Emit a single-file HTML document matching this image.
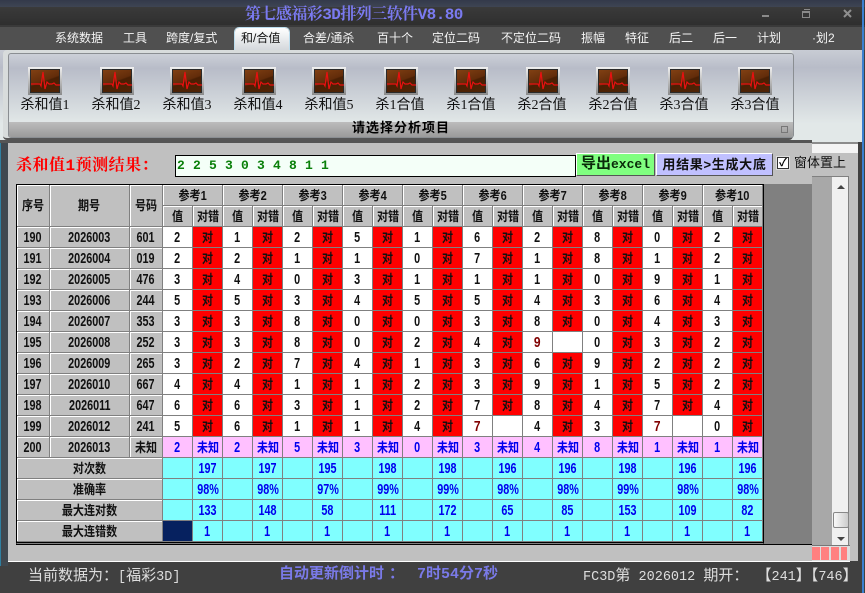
<!DOCTYPE html>
<html><head><meta charset="utf-8">
<style>
html,body{margin:0;padding:0;background:#404040}
#p{position:relative;width:865px;height:593px;overflow:hidden;background:#404040;font-family:"Liberation Sans","Noto Sans CJK SC",sans-serif}
#p div,#p svg{position:absolute}
.m{top:29px;color:#f4f4f4;font-size:12px;line-height:18px;white-space:nowrap;font-family:"Liberation Sans","WenQuanYi Zen Hei","Noto Sans CJK SC",sans-serif}
.l{top:97px;width:72px;text-align:center;font-size:14px;line-height:18px;color:#111;white-space:nowrap;font-family:"Liberation Serif","WenQuanYi Zen Hei","Noto Sans CJK SC",sans-serif}
.ic{top:67px;width:34px;height:28px;background:linear-gradient(#f0f0f0,#8a8a8a)}
.ic b{position:absolute;left:2px;top:2px;width:30px;height:24px;background:linear-gradient(160deg,#844214,#622c0a 48%,#4a2004 52%,#502406);box-shadow:inset 0 0 0 1px #2a2a2a;display:block}
.ic svg{left:2px;top:2px}
table{position:absolute;left:16px;top:184px;border-collapse:separate;border-spacing:0;table-layout:fixed;width:747px;border:1px solid #000;border-width:1px 1px 3px 1px;border-bottom-style:double;background:#808080;font-family:"Liberation Sans","Noto Sans CJK SC",sans-serif;font-weight:bold;font-size:15px;color:#111}
td{padding:0;height:20px;text-align:center;border-right:1px solid #808080;border-bottom:1px solid #808080;background:#fff;line-height:19px;overflow:hidden;white-space:nowrap}
i{font-style:normal;display:inline-block;transform:scaleX(.85);font-size:13px}
td b{display:inline-block;transform:scaleX(.72);font-size:15px;font-weight:bold}
td.h{background:#c0c0c0;box-shadow:inset 1px 1px 0 #fff}
td.r{background:#f00}
td.p{background:#ffc0ff;color:#00e}
td.c{background:#80ffff;color:#00e}
td.n{background:#06215f}
td.e{color:#800000}
td.e b{transform:scaleX(.8)}
u{text-decoration:none;font-size:13.5px;font-family:"Liberation Mono",monospace}
</style></head><body>
<div id="p">
<div style="left:0;top:0;width:865px;height:7px;background:linear-gradient(#33394a,#3e4553)"></div>
<div style="left:0;top:7px;width:865px;height:18px;background:linear-gradient(#3a3a3a,#2f2f2f)"></div>
<div style="left:0;top:25px;width:865px;height:2px;background:#3a3a3a"></div>
<div style="left:0;top:27px;width:865px;height:23px;background:#505050"></div>
<div style="left:245px;top:5px;font-size:16px;line-height:20px;font-weight:bold;color:#7a7af0;white-space:nowrap;font-family:'Liberation Mono','Noto Serif CJK SC',serif;letter-spacing:-.55px">第七感福彩3D排列三软件V8.80</div>
<div style="left:762px;top:15px;width:7px;height:2px;background:#8a8a8a"></div>
<div style="left:802px;top:11px;width:6px;height:4px;border:1px solid #8a8a8a;border-top-width:2px"></div>
<div style="left:804px;top:9px;width:6px;height:1px;background:#8a8a8a"></div>
<svg style="left:843px;top:9px" width="9" height="9" viewBox="0 0 9 9"><path d="M1 1L8 8M8 1L1 8" stroke="#8f8f8f" stroke-width="2" fill="none"/></svg>

<div class="m" style="left:55px">系统数据</div>
<div class="m" style="left:123px">工具</div>
<div class="m" style="left:166px">跨度/复式</div>
<div style="left:235px;top:28px;width:54px;height:22px;background:linear-gradient(#fff,#d4d8dc);border-radius:4px 4px 0 0;box-shadow:0 0 0 1px #bde"></div>
<div class="m" style="left:241px;color:#111">和/合值</div>
<div class="m" style="left:303px">合差/通杀</div>
<div class="m" style="left:377px">百十个</div>
<div class="m" style="left:432px">定位二码</div>
<div class="m" style="left:501px">不定位二码</div>
<div class="m" style="left:581px">振幅</div>
<div class="m" style="left:625px">特征</div>
<div class="m" style="left:669px">后二</div>
<div class="m" style="left:713px">后一</div>
<div class="m" style="left:757px">计划</div>
<div class="m" style="left:812px">·划2</div>

<div style="left:0;top:50px;width:862px;height:92px;background:linear-gradient(#c8ccd4,#b8bcc8 19%,#e2e8e8 80%)"></div>
<div style="left:3px;top:50px;width:790px;height:88px;background:#d8dcdc;border-radius:4px;border-bottom:2px solid #555"></div>
<div style="left:8px;top:53px;width:784px;height:83px;border:1px solid #8a8e92;border-radius:3px;background:linear-gradient(#ccd0d8,#b8bcc8 17%,#e2e8e8 84%);overflow:hidden">
<div style="left:0;top:68px;width:784px;height:16px;background:linear-gradient(#bcbcbc,#989898)"></div></div>
<div style="left:0;top:140px;width:812px;height:3px;background:#555"></div>
<div style="left:352px;top:119px;font-size:13px;line-height:16px;font-weight:bold;color:#000;white-space:nowrap;letter-spacing:1px;font-family:'Noto Sans CJK SC',sans-serif">请选择分析项目</div>
<div style="left:781px;top:126px;width:5px;height:5px;border:1px solid #777"></div>

<div class="ic" style="left:28px"><b></b><svg width="30" height="24" viewBox="0 0 30 24"><path d="M1 15H10L11 17L13 3L15 20L17 13L19 15H22L24 14L26 16H30" fill="none" stroke="#e81010" stroke-width="1.2"/></svg></div>
<div class="ic" style="left:100px"><b></b><svg width="30" height="24" viewBox="0 0 30 24"><path d="M1 15H10L11 17L13 3L15 20L17 13L19 15H22L24 14L26 16H30" fill="none" stroke="#e81010" stroke-width="1.2"/></svg></div>
<div class="ic" style="left:170px"><b></b><svg width="30" height="24" viewBox="0 0 30 24"><path d="M1 15H10L11 17L13 3L15 20L17 13L19 15H22L24 14L26 16H30" fill="none" stroke="#e81010" stroke-width="1.2"/></svg></div>
<div class="ic" style="left:242px"><b></b><svg width="30" height="24" viewBox="0 0 30 24"><path d="M1 15H10L11 17L13 3L15 20L17 13L19 15H22L24 14L26 16H30" fill="none" stroke="#e81010" stroke-width="1.2"/></svg></div>
<div class="ic" style="left:312px"><b></b><svg width="30" height="24" viewBox="0 0 30 24"><path d="M1 15H10L11 17L13 3L15 20L17 13L19 15H22L24 14L26 16H30" fill="none" stroke="#e81010" stroke-width="1.2"/></svg></div>
<div class="ic" style="left:384px"><b></b><svg width="30" height="24" viewBox="0 0 30 24"><path d="M1 15H10L11 17L13 3L15 20L17 13L19 15H22L24 14L26 16H30" fill="none" stroke="#e81010" stroke-width="1.2"/></svg></div>
<div class="ic" style="left:454px"><b></b><svg width="30" height="24" viewBox="0 0 30 24"><path d="M1 15H10L11 17L13 3L15 20L17 13L19 15H22L24 14L26 16H30" fill="none" stroke="#e81010" stroke-width="1.2"/></svg></div>
<div class="ic" style="left:526px"><b></b><svg width="30" height="24" viewBox="0 0 30 24"><path d="M1 15H10L11 17L13 3L15 20L17 13L19 15H22L24 14L26 16H30" fill="none" stroke="#e81010" stroke-width="1.2"/></svg></div>
<div class="ic" style="left:596px"><b></b><svg width="30" height="24" viewBox="0 0 30 24"><path d="M1 15H10L11 17L13 3L15 20L17 13L19 15H22L24 14L26 16H30" fill="none" stroke="#e81010" stroke-width="1.2"/></svg></div>
<div class="ic" style="left:668px"><b></b><svg width="30" height="24" viewBox="0 0 30 24"><path d="M1 15H10L11 17L13 3L15 20L17 13L19 15H22L24 14L26 16H30" fill="none" stroke="#e81010" stroke-width="1.2"/></svg></div>
<div class="ic" style="left:738px"><b></b><svg width="30" height="24" viewBox="0 0 30 24"><path d="M1 15H10L11 17L13 3L15 20L17 13L19 15H22L24 14L26 16H30" fill="none" stroke="#e81010" stroke-width="1.2"/></svg></div>
<div class="l" style="left:9px">杀和值1</div>
<div class="l" style="left:80px">杀和值2</div>
<div class="l" style="left:151px">杀和值3</div>
<div class="l" style="left:222px">杀和值4</div>
<div class="l" style="left:293px">杀和值5</div>
<div class="l" style="left:364px">杀1合值</div>
<div class="l" style="left:435px">杀1合值</div>
<div class="l" style="left:506px">杀2合值</div>
<div class="l" style="left:577px">杀2合值</div>
<div class="l" style="left:648px">杀3合值</div>
<div class="l" style="left:719px">杀3合值</div>

<div style="left:8px;top:143px;width:850px;height:418px;background:#c0c0c0"></div>
<div style="left:812px;top:142px;width:46px;height:2px;background:#8c8c8c"></div>
<div style="left:812px;top:144px;width:46px;height:9px;background:#f4f4f4"></div>
<div style="left:0;top:143px;width:1px;height:423px;background:#2f7fa0"></div>
<div style="left:1px;top:143px;width:7px;height:423px;background:#40484f"></div>
<div style="left:8px;top:561px;width:842px;height:1px;background:#fff"></div>
<div style="left:862px;top:0;width:2px;height:593px;background:#3a80d0"></div>

<div style="left:16px;top:156px;font-size:16px;line-height:20px;font-weight:bold;color:#f00;white-space:nowrap;letter-spacing:.5px;font-family:'Liberation Mono','Noto Serif CJK SC',serif">杀和值1预测结果：</div>
<div style="left:175px;top:155px;width:399px;height:20px;background:#f4fff8;border:1px solid #000"></div>
<div style="left:177px;top:155px;width:380px;height:21px;line-height:21px;font-size:13px;font-weight:bold;color:#0a800a;font-family:'Liberation Mono',monospace;white-space:pre;letter-spacing:8.2px">2253034811</div>
<div style="left:576px;top:153px;width:79px;height:23px;background:#80ff80;border:1px solid;border-color:#fff #555 #555 #fff;box-sizing:border-box;text-align:center;font-size:13px;line-height:21px;font-weight:bold;color:#0a2a0a;font-family:'Liberation Mono','Noto Sans CJK SC',monospace;white-space:nowrap"><span style="font-size:15px">导出</span>excel</div>
<div style="left:656px;top:153px;width:117px;height:23px;background:#c0c0ff;border:1px solid;border-color:#fff #555 #555 #fff;box-sizing:border-box;text-align:center;font-size:13px;line-height:21px;font-weight:bold;color:#111;white-space:nowrap;letter-spacing:.7px;font-family:'Liberation Sans','Noto Sans CJK SC',sans-serif">用结果&gt;生成大底</div>
<div style="left:777px;top:157px;width:10px;height:10px;background:#fff;border:1px solid #333;box-shadow:0 0 0 1px #ddd;color:#000;font-size:11px;line-height:10px;text-align:center;font-weight:bold">✓</div>
<div style="left:794px;top:153px;font-size:13px;line-height:18px;color:#111;white-space:nowrap;font-family:'WenQuanYi Zen Hei','Noto Sans CJK SC',sans-serif">窗体置上</div>

<div style="left:16px;top:184px;width:796px;height:361px;background:#808080;border-bottom:1px solid #000;box-sizing:border-box"></div>
<div style="left:812px;top:176px;width:20px;height:369px;background:#a8a8a8"></div>
<div style="left:832px;top:177px;width:16px;height:368px;background:#f0f0f0"></div>
<div style="left:848px;top:177px;width:1px;height:368px;background:#808080"></div>
<div style="left:812px;top:176px;width:37px;height:1px;background:#808080"></div>
<div style="left:812px;top:545px;width:38px;height:1px;background:#777"></div>
<div style="left:837px;top:185px;border:4px solid transparent;border-top:0;border-bottom:4px solid #444"></div>
<div style="left:837px;top:537px;border:4px solid transparent;border-bottom:0;border-top:4px solid #444"></div>
<div style="left:833px;top:512px;width:14px;height:14px;border:1px solid #888;border-radius:2px;background:linear-gradient(90deg,#fafafa,#ccc)"></div>
<div style="left:812px;top:546px;width:38px;height:15px;background:#ddd"></div>
<div style="left:812px;top:547px;width:8px;height:13px;background:#ff8080"></div>
<div style="left:821px;top:547px;width:8px;height:13px;background:#ff8080"></div>
<div style="left:831px;top:547px;width:8px;height:13px;background:#ff8080"></div>
<div style="left:841px;top:547px;width:6px;height:13px;background:#ff8080"></div>

<table>
<colgroup><col style="width:33px"><col style="width:80px"><col style="width:33px"><col span="20" style="width:30px"></colgroup>
<tr><td class="h" rowspan="2"><i>序号</i></td><td class="h" rowspan="2"><i>期号</i></td><td class="h" rowspan="2"><i>号码</i></td><td class="h" colspan="2"><i>参考1</i></td><td class="h" colspan="2"><i>参考2</i></td><td class="h" colspan="2"><i>参考3</i></td><td class="h" colspan="2"><i>参考4</i></td><td class="h" colspan="2"><i>参考5</i></td><td class="h" colspan="2"><i>参考6</i></td><td class="h" colspan="2"><i>参考7</i></td><td class="h" colspan="2"><i>参考8</i></td><td class="h" colspan="2"><i>参考9</i></td><td class="h" colspan="2"><i>参考10</i></td></tr>
<tr><td class="h"><i>值</i></td><td class="h"><i>对错</i></td><td class="h"><i>值</i></td><td class="h"><i>对错</i></td><td class="h"><i>值</i></td><td class="h"><i>对错</i></td><td class="h"><i>值</i></td><td class="h"><i>对错</i></td><td class="h"><i>值</i></td><td class="h"><i>对错</i></td><td class="h"><i>值</i></td><td class="h"><i>对错</i></td><td class="h"><i>值</i></td><td class="h"><i>对错</i></td><td class="h"><i>值</i></td><td class="h"><i>对错</i></td><td class="h"><i>值</i></td><td class="h"><i>对错</i></td><td class="h"><i>值</i></td><td class="h"><i>对错</i></td></tr>
<tr><td class="h"><b>190</b></td><td class="h"><b>2026003</b></td><td class="h"><b>601</b></td><td><b>2</b></td><td class="r"><i>对</i></td><td><b>1</b></td><td class="r"><i>对</i></td><td><b>2</b></td><td class="r"><i>对</i></td><td><b>5</b></td><td class="r"><i>对</i></td><td><b>1</b></td><td class="r"><i>对</i></td><td><b>6</b></td><td class="r"><i>对</i></td><td><b>2</b></td><td class="r"><i>对</i></td><td><b>8</b></td><td class="r"><i>对</i></td><td><b>0</b></td><td class="r"><i>对</i></td><td><b>2</b></td><td class="r"><i>对</i></td></tr>
<tr><td class="h"><b>191</b></td><td class="h"><b>2026004</b></td><td class="h"><b>019</b></td><td><b>2</b></td><td class="r"><i>对</i></td><td><b>2</b></td><td class="r"><i>对</i></td><td><b>1</b></td><td class="r"><i>对</i></td><td><b>1</b></td><td class="r"><i>对</i></td><td><b>0</b></td><td class="r"><i>对</i></td><td><b>7</b></td><td class="r"><i>对</i></td><td><b>1</b></td><td class="r"><i>对</i></td><td><b>8</b></td><td class="r"><i>对</i></td><td><b>1</b></td><td class="r"><i>对</i></td><td><b>2</b></td><td class="r"><i>对</i></td></tr>
<tr><td class="h"><b>192</b></td><td class="h"><b>2026005</b></td><td class="h"><b>476</b></td><td><b>3</b></td><td class="r"><i>对</i></td><td><b>4</b></td><td class="r"><i>对</i></td><td><b>0</b></td><td class="r"><i>对</i></td><td><b>3</b></td><td class="r"><i>对</i></td><td><b>1</b></td><td class="r"><i>对</i></td><td><b>1</b></td><td class="r"><i>对</i></td><td><b>1</b></td><td class="r"><i>对</i></td><td><b>0</b></td><td class="r"><i>对</i></td><td><b>9</b></td><td class="r"><i>对</i></td><td><b>1</b></td><td class="r"><i>对</i></td></tr>
<tr><td class="h"><b>193</b></td><td class="h"><b>2026006</b></td><td class="h"><b>244</b></td><td><b>5</b></td><td class="r"><i>对</i></td><td><b>5</b></td><td class="r"><i>对</i></td><td><b>3</b></td><td class="r"><i>对</i></td><td><b>4</b></td><td class="r"><i>对</i></td><td><b>5</b></td><td class="r"><i>对</i></td><td><b>5</b></td><td class="r"><i>对</i></td><td><b>4</b></td><td class="r"><i>对</i></td><td><b>3</b></td><td class="r"><i>对</i></td><td><b>6</b></td><td class="r"><i>对</i></td><td><b>4</b></td><td class="r"><i>对</i></td></tr>
<tr><td class="h"><b>194</b></td><td class="h"><b>2026007</b></td><td class="h"><b>353</b></td><td><b>3</b></td><td class="r"><i>对</i></td><td><b>3</b></td><td class="r"><i>对</i></td><td><b>8</b></td><td class="r"><i>对</i></td><td><b>0</b></td><td class="r"><i>对</i></td><td><b>0</b></td><td class="r"><i>对</i></td><td><b>3</b></td><td class="r"><i>对</i></td><td><b>8</b></td><td class="r"><i>对</i></td><td><b>0</b></td><td class="r"><i>对</i></td><td><b>4</b></td><td class="r"><i>对</i></td><td><b>3</b></td><td class="r"><i>对</i></td></tr>
<tr><td class="h"><b>195</b></td><td class="h"><b>2026008</b></td><td class="h"><b>252</b></td><td><b>3</b></td><td class="r"><i>对</i></td><td><b>3</b></td><td class="r"><i>对</i></td><td><b>8</b></td><td class="r"><i>对</i></td><td><b>0</b></td><td class="r"><i>对</i></td><td><b>2</b></td><td class="r"><i>对</i></td><td><b>4</b></td><td class="r"><i>对</i></td><td class="e"><b>9</b></td><td></td><td><b>0</b></td><td class="r"><i>对</i></td><td><b>3</b></td><td class="r"><i>对</i></td><td><b>2</b></td><td class="r"><i>对</i></td></tr>
<tr><td class="h"><b>196</b></td><td class="h"><b>2026009</b></td><td class="h"><b>265</b></td><td><b>3</b></td><td class="r"><i>对</i></td><td><b>2</b></td><td class="r"><i>对</i></td><td><b>7</b></td><td class="r"><i>对</i></td><td><b>4</b></td><td class="r"><i>对</i></td><td><b>1</b></td><td class="r"><i>对</i></td><td><b>3</b></td><td class="r"><i>对</i></td><td><b>6</b></td><td class="r"><i>对</i></td><td><b>9</b></td><td class="r"><i>对</i></td><td><b>2</b></td><td class="r"><i>对</i></td><td><b>2</b></td><td class="r"><i>对</i></td></tr>
<tr><td class="h"><b>197</b></td><td class="h"><b>2026010</b></td><td class="h"><b>667</b></td><td><b>4</b></td><td class="r"><i>对</i></td><td><b>4</b></td><td class="r"><i>对</i></td><td><b>1</b></td><td class="r"><i>对</i></td><td><b>1</b></td><td class="r"><i>对</i></td><td><b>2</b></td><td class="r"><i>对</i></td><td><b>3</b></td><td class="r"><i>对</i></td><td><b>9</b></td><td class="r"><i>对</i></td><td><b>1</b></td><td class="r"><i>对</i></td><td><b>5</b></td><td class="r"><i>对</i></td><td><b>2</b></td><td class="r"><i>对</i></td></tr>
<tr><td class="h"><b>198</b></td><td class="h"><b>2026011</b></td><td class="h"><b>647</b></td><td><b>6</b></td><td class="r"><i>对</i></td><td><b>6</b></td><td class="r"><i>对</i></td><td><b>3</b></td><td class="r"><i>对</i></td><td><b>1</b></td><td class="r"><i>对</i></td><td><b>2</b></td><td class="r"><i>对</i></td><td><b>7</b></td><td class="r"><i>对</i></td><td><b>8</b></td><td class="r"><i>对</i></td><td><b>4</b></td><td class="r"><i>对</i></td><td><b>7</b></td><td class="r"><i>对</i></td><td><b>4</b></td><td class="r"><i>对</i></td></tr>
<tr><td class="h"><b>199</b></td><td class="h"><b>2026012</b></td><td class="h"><b>241</b></td><td><b>5</b></td><td class="r"><i>对</i></td><td><b>6</b></td><td class="r"><i>对</i></td><td><b>1</b></td><td class="r"><i>对</i></td><td><b>1</b></td><td class="r"><i>对</i></td><td><b>4</b></td><td class="r"><i>对</i></td><td class="e"><b>7</b></td><td></td><td><b>4</b></td><td class="r"><i>对</i></td><td><b>3</b></td><td class="r"><i>对</i></td><td class="e"><b>7</b></td><td></td><td><b>0</b></td><td class="r"><i>对</i></td></tr>
<tr><td class="h"><b>200</b></td><td class="h"><b>2026013</b></td><td class="h"><i>未知</i></td><td class="p"><b>2</b></td><td class="p"><i>未知</i></td><td class="p"><b>2</b></td><td class="p"><i>未知</i></td><td class="p"><b>5</b></td><td class="p"><i>未知</i></td><td class="p"><b>3</b></td><td class="p"><i>未知</i></td><td class="p"><b>0</b></td><td class="p"><i>未知</i></td><td class="p"><b>3</b></td><td class="p"><i>未知</i></td><td class="p"><b>4</b></td><td class="p"><i>未知</i></td><td class="p"><b>8</b></td><td class="p"><i>未知</i></td><td class="p"><b>1</b></td><td class="p"><i>未知</i></td><td class="p"><b>1</b></td><td class="p"><i>未知</i></td></tr>
<tr><td class="h" colspan="3"><i>对次数</i></td><td class="c"></td><td class="c"><b>197</b></td><td class="c"></td><td class="c"><b>197</b></td><td class="c"></td><td class="c"><b>195</b></td><td class="c"></td><td class="c"><b>198</b></td><td class="c"></td><td class="c"><b>198</b></td><td class="c"></td><td class="c"><b>196</b></td><td class="c"></td><td class="c"><b>196</b></td><td class="c"></td><td class="c"><b>198</b></td><td class="c"></td><td class="c"><b>196</b></td><td class="c"></td><td class="c"><b>196</b></td></tr>
<tr><td class="h" colspan="3"><i>准确率</i></td><td class="c"></td><td class="c"><b>98%</b></td><td class="c"></td><td class="c"><b>98%</b></td><td class="c"></td><td class="c"><b>97%</b></td><td class="c"></td><td class="c"><b>99%</b></td><td class="c"></td><td class="c"><b>99%</b></td><td class="c"></td><td class="c"><b>98%</b></td><td class="c"></td><td class="c"><b>98%</b></td><td class="c"></td><td class="c"><b>99%</b></td><td class="c"></td><td class="c"><b>98%</b></td><td class="c"></td><td class="c"><b>98%</b></td></tr>
<tr><td class="h" colspan="3"><i>最大连对数</i></td><td class="c"></td><td class="c"><b>133</b></td><td class="c"></td><td class="c"><b>148</b></td><td class="c"></td><td class="c"><b>58</b></td><td class="c"></td><td class="c"><b>111</b></td><td class="c"></td><td class="c"><b>172</b></td><td class="c"></td><td class="c"><b>65</b></td><td class="c"></td><td class="c"><b>85</b></td><td class="c"></td><td class="c"><b>153</b></td><td class="c"></td><td class="c"><b>109</b></td><td class="c"></td><td class="c"><b>82</b></td></tr>
<tr><td class="h" colspan="3"><i>最大连错数</i></td><td class="n"></td><td class="c"><b>1</b></td><td class="c"></td><td class="c"><b>1</b></td><td class="c"></td><td class="c"><b>1</b></td><td class="c"></td><td class="c"><b>1</b></td><td class="c"></td><td class="c"><b>1</b></td><td class="c"></td><td class="c"><b>1</b></td><td class="c"></td><td class="c"><b>1</b></td><td class="c"></td><td class="c"><b>1</b></td><td class="c"></td><td class="c"><b>1</b></td><td class="c"></td><td class="c"><b>1</b></td></tr>
</table>

<div style="left:28px;top:565px;font-size:15px;line-height:20px;color:#ddd;white-space:pre;font-family:'WenQuanYi Zen Hei','Noto Sans CJK SC',sans-serif">当前数据为：<u>[</u>福彩<u>3D]</u></div>
<div style="left:279px;top:565px;font-size:15px;line-height:20px;font-weight:bold;color:#7a7ae8;white-space:pre;font-family:'Liberation Mono','Noto Sans CJK SC',monospace">自动更新倒计时<span style="position:relative;left:5px">：</span>  7时54分7秒</div>
<div style="left:583px;top:565px;font-size:15px;line-height:20px;color:#ddd;white-space:pre;font-family:'WenQuanYi Zen Hei','Noto Sans CJK SC',sans-serif"><u>FC3D</u>第<u> 2026012 </u>期开：<u> </u>【<u>241</u>】【<u>746</u>】</div>
</div>
</body></html>
